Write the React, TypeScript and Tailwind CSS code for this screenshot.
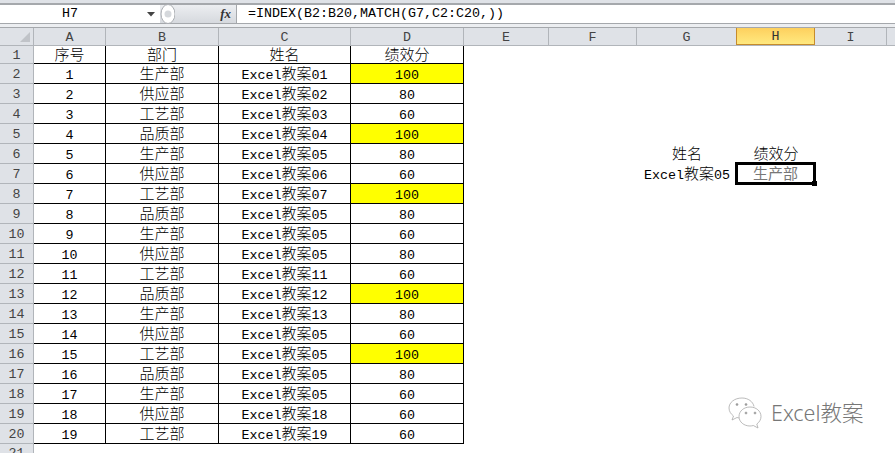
const cols = [72, 113, 132, 113, 85, 88, 100, 78, 72, 9];
const letters = ["A", "B", "C", "D", "E", "F", "G", "H", "I", ""];
const depts = ["生产部", "供应部", "工艺部", "品质部"];
const names = ["01", "02", "03", "04", "05", "06", "07", "05", "05", "05", "11", "12", "13", "05", "05", "05", "05", "18", "19"];
const scores = [100, 80, 60, 100, 80, 60, 100, 80, 60, 80, 60, 100, 80, 60, 100, 80, 60, 60, 60];

function Txt({ t }: { t: string }) {
  const parts = t.match(/[\u4e00-\u9fff]+|[^\u4e00-\u9fff]+/g) || [];
  return (
    <span className="whitespace-nowrap">
      {parts.map((p, i) =>
        /[\u4e00-\u9fff]/.test(p) ? (
          <span key={i} className="text-[15px] font-['Noto_Sans_CJK_SC',sans-serif] font-light">{p}</span>
        ) : (
          <span key={i} className="text-[13.33px] font-['Liberation_Mono',monospace]">{p}</span>
        )
      )}
    </span>
  );
}

function Cell({ w, t, bordered, yellow }: { w: number; t?: string; bordered?: boolean; yellow?: boolean }) {
  return (
    <div
      style={{ width: w }}
      className={
        "h-full shrink-0 flex items-center justify-center text-black " +
        (bordered ? "border-r border-b border-black pt-[2px] " : "") +
        (yellow ? "bg-[#ffff00] " : "")
      }
    >
      {t ? <Txt t={t} /> : null}
    </div>
  );
}

function RowHead({ n }: { n: number }) {
  return (
    <div className="w-[34px] h-full shrink-0 flex items-center justify-center pt-[2px] bg-[#dfe2e7] border-r border-b border-[#b1b5ba] text-[#444] text-[13.33px] font-['Liberation_Mono',monospace]">
      {n}
    </div>
  );
}

export default function App() {
  return (
    <div className="w-[895px] h-[453px] overflow-hidden bg-white relative flex flex-col font-['Liberation_Mono',monospace]">
      <div className="h-[5px] shrink-0 bg-[#dfe2e7] border-b-2 border-[#a5a8ac]" />
      <div className="h-[18px] shrink-0 flex items-center bg-white">
        <div className="w-[140px] shrink-0 flex justify-center text-[13.33px] text-black">H7</div>
        <svg width="8" height="5" viewBox="0 0 8 5" className="ml-[7px] shrink-0"><path d="M0 0h8L4 4.500z" fill="#444" /></svg>
        <div className="ml-[5px] w-[76px] h-full shrink-0 relative flex items-center bg-gradient-to-b from-[#eceef1] to-[#d6d9de]">
          <svg width="16" height="20" viewBox="0 0 16 20" className="absolute left-[-1px] top-[-1px]">
            <ellipse cx="9" cy="10" rx="7" ry="9.500" fill="#fff" stroke="#a8abb0" />
            <ellipse cx="9" cy="10" rx="3.500" ry="3.500" fill="#d5d8dc" />
          </svg>
          <span className="absolute right-[5px] text-[13px] italic font-bold font-['Liberation_Serif',serif] text-[#333]">fx</span>
        </div>
        <div className="w-px h-full shrink-0 bg-[#a5a8ac]" />
        <div className="pl-[11px] flex-1 text-[13.33px] text-black whitespace-nowrap">=INDEX(B2:B20,MATCH(G7,C2:C20,))</div>
      </div>
      <div className="h-[5px] shrink-0 bg-[#eceef1] border-y border-[#a5a8ac]" />
      <div className="h-[18px] shrink-0 flex bg-[#dfe2e7] border-b border-[#b1b5ba]">
        <div className="w-[34px] shrink-0 border-r border-[#b1b5ba] flex items-end justify-end pr-[3px] pb-[3px]">
          <svg width="10" height="10" viewBox="0 0 10 10"><path d="M10 0V10H0z" fill="#c0c3c8" /></svg>
        </div>
        {cols.map((w, i) => (
          <div
            key={i}
            style={{ width: letters[i] === "H" ? w + 1 : w }}
            className={
              "shrink-0 flex items-center justify-center pt-[2px] text-[13.33px] border-r " +
              (letters[i] === "H"
                ? "bg-gradient-to-b from-[#fdd05e] to-[#ffe97f] border-l border-b border-[#c68c2c] text-[#333] -ml-px"
                : "border-[#b1b5ba] text-[#444]")
            }
          >
            {letters[i]}
          </div>
        ))}
      </div>
      <div className="h-[18px] shrink-0 flex">
        <RowHead n={1} />
        <Cell w={cols[0]} t="序号" bordered />
        <Cell w={cols[1]} t="部门" bordered />
        <Cell w={cols[2]} t="姓名" bordered />
        <Cell w={cols[3]} t="绩效分" bordered />
      </div>
      {scores.map((s, i) => {
        const row = i + 2;
        return (
          <div key={row} className="h-[20px] shrink-0 flex">
            <RowHead n={row} />
            <Cell w={cols[0]} t={String(i + 1)} bordered />
            <Cell w={cols[1]} t={depts[i % 4]} bordered />
            <Cell w={cols[2]} t={"Excel教案" + names[i]} bordered />
            <Cell w={cols[3]} t={String(s)} bordered yellow={s === 100} />
            <Cell w={cols[4]} />
            <Cell w={cols[5]} />
            {row === 6 ? (
              <>
                <Cell w={cols[6]} t="姓名" />
                <Cell w={cols[7]} t="绩效分" />
              </>
            ) : null}
            {row === 7 ? (
              <>
                <Cell w={cols[6]} t="Excel教案05" />
                <div className="w-[81px] h-[23px] -mt-[2px] -ml-[2px] relative shrink-0 flex items-center justify-center border-[3px] border-black text-[#777]">
                  <span className="text-[15px] font-['Noto_Sans_CJK_SC',sans-serif]">生产部</span>
                  <div className="absolute right-[-4px] bottom-[-4px] w-[5px] h-[5px] bg-black" />
                </div>
              </>
            ) : null}
          </div>
        );
      })}
      <div className="flex-1 flex">
        <div className="w-[34px] shrink-0 bg-[#dfe2e7] border-r border-[#b1b5ba] flex justify-center text-[#444] text-[13.33px]">21</div>
      </div>
      <div className="absolute left-[728px] top-[397px] flex items-center gap-[9px] text-[#777]">
        <svg width="34" height="32" viewBox="0 0 34 32" fill="none" stroke="#aaa" strokeWidth="0.8">
          <path d="M14 1C6.500 1 1 5.500 1 11c0 3.500 2 6 4.500 8L4 23l5-2.500c1 .3 2 .5 3 .5" fill="#fff" />
          <path d="M14 1c6 0 11 3.500 12 8.500" />
          <path d="M22 10c-6 0-11 4-11 9.500S16 29 22 29c1.200 0 2.300-.2 3.300-.5L30 31l-1.200-4c2.500-1.700 4.200-4.500 4.200-7.500C33 14 28 10 22 10z" fill="#fff" />
          <circle cx="9" cy="7.500" r="1" fill="#888" />
          <circle cx="18" cy="7.500" r="1" fill="#888" />
          <circle cx="18" cy="16" r="1" fill="#888" />
          <circle cx="27" cy="16" r="1" fill="#888" />
        </svg>
        <span className="text-[21.5px] font-light leading-none font-['Noto_Sans','Noto_Sans_CJK_SC',sans-serif] whitespace-nowrap">Excel教案</span>
      </div>
    </div>
  );
}
